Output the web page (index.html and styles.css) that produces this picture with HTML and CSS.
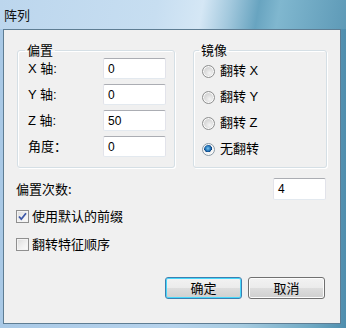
FILE: index.html
```html
<!DOCTYPE html>
<html>
<head>
<meta charset="utf-8">
<link rel="stylesheet" href="styles.css">
</head>
<body>
<div class="window">
  <div class="titlebar"><span class="title">阵列</span></div>
  <div class="client">
    <div class="groups">
      <fieldset class="group group-offset">
        <legend>偏置</legend>
        <div class="field"><span class="lbl">X 轴:</span><span class="input">0</span></div>
        <div class="field"><span class="lbl">Y 轴:</span><span class="input">0</span></div>
        <div class="field"><span class="lbl">Z 轴:</span><span class="input">50</span></div>
        <div class="field"><span class="lbl">角度：</span><span class="input">0</span></div>
      </fieldset>
      <fieldset class="group group-mirror">
        <legend>镜像</legend>
        <div class="radio-row"><span class="radio"></span><span>翻转 X</span></div>
        <div class="radio-row"><span class="radio"></span><span>翻转 Y</span></div>
        <div class="radio-row"><span class="radio"></span><span>翻转 Z</span></div>
        <div class="radio-row"><span class="radio checked"></span><span>无翻转</span></div>
      </fieldset>
    </div>
    <div class="count-row"><span>偏置次数:</span><span class="input count">4</span></div>
    <div class="check-row first"><span class="checkbox checked"><svg viewBox="0 0 13 13" width="13" height="13"><path d="M3 6.5 L5.3 9.2 L10 3.2" fill="none" stroke="#3d58a8" stroke-width="1.8"/></svg></span><span>使用默认的前缀</span></div>
    <div class="check-row"><span class="checkbox"></span><span>翻转特征顺序</span></div>
    <div class="buttons">
      <button class="btn default">确定</button>
      <button class="btn">取消</button>
    </div>
  </div>
</div>
</body>
</html>
```
FILE: styles.css
```css
html, body {
  margin: 0;
  padding: 0;
}
body {
  width: 346px;
  height: 328px;
  overflow: hidden;
  font-family: "Liberation Sans", "Noto Sans CJK SC", sans-serif;
  font-size: 12px;
  color: #000;
}
.window {
  width: 346px;
  height: 328px;
  display: flex;
  flex-direction: column;
  background: linear-gradient(to right, #a9c9e6 0%, #b7d3ec 50%, #a6cbe0 70%, #6fa9c4 90%, #4f8eae 100%);
}
.titlebar {
  height: 29px;
  flex: none;
  display: flex;
  align-items: center;
  padding-left: 4px;
  background: linear-gradient(100deg, #bcd6ed 0%, #c7def1 45%, #d5e7f5 58%, #a2c8dd 66%, #68a4c0 74%, #80b7cf 80%, #5e9ab7 100%);
}
.title {
  font-size: 13px;
  font-family: "Noto Sans CJK SC", sans-serif;
  color: #111;
  margin-top: -1px;
}
.client {
  flex: 1;
  margin: 0 5px 4px 3px;
  border: 1px solid #5e7d93;
  background: #f0f0f0;
  display: flex;
  flex-direction: column;
  padding: 0 13px 24px 12px;
}
.groups {
  display: flex;
  align-items: stretch;
  margin-top: 13px;
  gap: 18px;
}
.group {
  margin: 0;
  border: 1px solid #d5dfe5;
  border-radius: 3px;
  box-shadow: inset 1px 1px 0 #fff, 1px 1px 0 #fff;
  padding: 1px 0 5px 0;
}
.group legend {
  padding: 0 2px;
  line-height: 14px;
  font-size: 13px;
  font-family: "Noto Sans CJK SC", sans-serif;
}
.group-offset {
  width: 158px;
  margin-left: 1px;
  display: flex;
  flex-direction: column;
  gap: 5px;
  box-sizing: border-box;
  padding-left: 10px;
  padding-right: 8px;
}
.group-offset legend {
  margin-left: -3px;
}
.group-mirror {
  flex: 1;
  margin-right: 0;
  box-sizing: border-box;
  padding-left: 8px;
}
.group-mirror legend {
  margin-left: -3px;
}
.field {
  display: flex;
  align-items: center;
  justify-content: space-between;
  height: 21px;
}
.lbl {
  font-size: 13px;
  line-height: 16px;
}
.input {
  display: flex;
  align-items: center;
  box-sizing: border-box;
  width: 63px;
  height: 21px;
  padding-left: 4px;
  background: #fff;
  border: 1px solid #dbdfe6;
  border-top-color: #abadb3;
  border-left-color: #e2e3ea;
  border-right-color: #e2e3ea;
  border-bottom-color: #e3e9ef;
  border-radius: 2px;
  font-size: 12px;
}
.radio-row {
  height: 26px;
  display: flex;
  align-items: center;
  gap: 5px;
  font-size: 13px;
  line-height: 16px;
}
.radio {
  width: 13px;
  height: 13px;
  box-sizing: border-box;
  border-radius: 50%;
  border: 1px solid #8e8f8f;
  background: radial-gradient(circle at 60% 65%, #f4f4f4 0%, #dcdcdc 45%, #cbcbcb 100%);
  box-shadow: inset 0 0 0 1px #fbfbfb;
  flex: none;
}
.radio.checked {
  border-color: #8a9aa6;
  background: radial-gradient(circle at 45% 40%, #7bc5f0 0%, #1e6fb3 30%, #0d3d78 42%, #f4f4f4 46%, #e6e6e6 100%);
}
.count-row {
  display: flex;
  justify-content: space-between;
  align-items: center;
  margin-top: 10px;
  padding-right: 1px;
  height: 21px;
  line-height: 16px;
  font-size: 13px;
  font-family: "Noto Sans CJK SC", sans-serif;
}
.input.count {
  width: 53px;
  height: 22px;
  font-family: "Liberation Sans", sans-serif;
  font-size: 12px;
}
.check-row {
  display: flex;
  align-items: center;
  gap: 3px;
  height: 16px;
  line-height: 16px;
  margin-top: 12px;
  font-size: 13px;
  font-family: "Noto Sans CJK SC", sans-serif;
}
.check-row.first {
  margin-top: 9px;
}
.checkbox {
  width: 13px;
  height: 13px;
  box-sizing: border-box;
  border: 1px solid #8f8f8f;
  background: linear-gradient(135deg, #dcdcdc 0%, #f2f2f2 60%, #fbfbfb 100%);
  box-shadow: inset 0 0 0 1px #f4f4f4;
  position: relative;
  flex: none;
}
.checkbox svg {
  position: absolute;
  left: -1px;
  top: -1px;
}
.buttons {
  margin-top: auto;
  display: flex;
  justify-content: flex-end;
  gap: 6px;
  padding-right: 2px;
}
.btn {
  width: 77px;
  height: 22px;
  box-sizing: border-box;
  border: 1px solid #707070;
  border-radius: 3px;
  background: linear-gradient(to bottom, #f2f2f2 0%, #ebebeb 50%, #dddddd 50%, #cfcfcf 100%);
  box-shadow: inset 0 0 0 1px #fcfcfc;
  font-family: "Noto Sans CJK SC", sans-serif;
  font-size: 13px;
  color: #000;
  padding: 0;
  line-height: 18px;
}
.btn.default {
  border-color: #3c7fb1;
  box-shadow: inset 0 0 0 1px #48d8fb;
}
```
